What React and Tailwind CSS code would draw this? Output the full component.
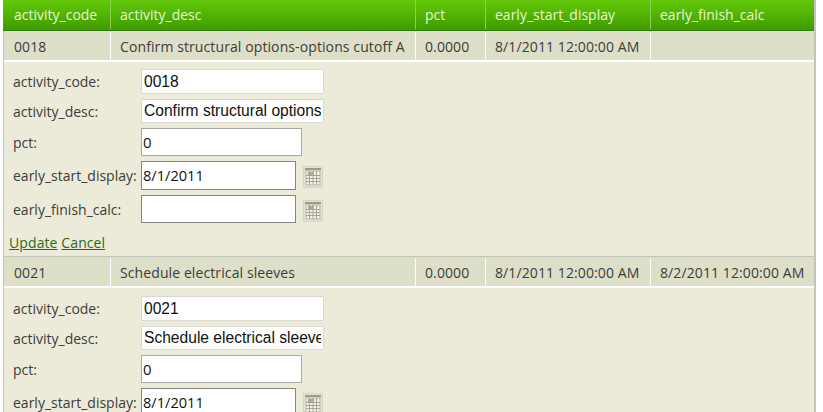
import React from 'react';

const font = "font-['Open_Sans','Noto_Sans',sans-serif]";
const cols = 'grid grid-cols-[106px_305px_70px_165px_165px]';
const columns = ['activity_code', 'activity_desc', 'pct', 'early_start_display', 'early_finish_calc'];

const CalendarIcon = () => (
    <svg width="20" height="22" viewBox="0 0 20 22" className="shrink-0 ml-[7px] mt-[3px]">
        <rect x="0.5" y="0.5" width="19" height="21" fill="#e3e2d0" stroke="#d6d5c2" />
        <rect x="2" y="2" width="16" height="2" fill="#9a9b8c" />
        <rect x="3" y="5" width="14" height="14" fill="#f2f2e8" stroke="#b5b6a6" />
        <path d="M3 9.5h14M3 12.5h14M3 15.5h14M6.5 5v14M10 5v14M13.5 5v14" stroke="#a3a495" strokeWidth="1" />
        <rect x="5" y="6" width="6" height="3" fill="#a9aa9a" />
    </svg>
);

const Field = ({ label, value, inputClass, calendar, rowClass }) => (
    <div className={`flex items-center ${rowClass}`}>
        <label className="w-[137px] shrink-0 pl-[9px] text-[14px] text-[#3c3c38] whitespace-nowrap">{label}</label>
        <input readOnly value={value} className={`h-full bg-white text-[#111] outline-none ${inputClass}`} />
        {calendar && <CalendarIcon />}
    </div>
);

const EditForm = ({ code, desc, start, finish, last }) => (
    <div className={`flex flex-col ${last ? 'pt-[8px]' : 'pt-[7px]'}`}>
        <Field label="activity_code:" value={code} rowClass="h-[25px]" inputClass="w-[183px] border border-[#d8d8d0] rounded-[1px] px-[2px] font-['Liberation_Sans',sans-serif] text-[15.6px]" />
        <Field label="activity_desc:" value={desc} rowClass="h-[24px] mt-[5px]" inputClass="w-[183px] border border-[#d8d8d0] rounded-[1px] px-[2px] font-['Liberation_Sans',sans-serif] text-[15.6px]" />
        <Field label="pct:" value="0" rowClass="h-[28px] mt-[5px]" inputClass="w-[161px] border border-[#a9a99f] px-px text-[15px]" />
        <Field label="early_start_display:" value={start} calendar rowClass="h-[29px] mt-[5px]" inputClass="w-[155px] border border-[#85857c] px-px pb-[2px] text-[14.6px]" />
        {!last && (
            <>
                <Field label="early_finish_calc:" value={finish} calendar rowClass="h-[28px] mt-[5px]" inputClass="w-[155px] border border-[#85857c] px-px text-[14.6px]" />
                <div className="mt-[8px] pl-[5px] h-[23px] text-[14px] leading-[23px] tracking-[0.1px] text-[#2d6a12]">
                    <a href="#" className="underline">Update</a> <a href="#" className="underline">Cancel</a>
                </div>
            </>
        )}
    </div>
);

const DataRow = ({ cells }) => (
    <div className={`${cols} h-[29px] pt-px bg-[#dedfc8] text-[14px] text-[#3c3c38] tracking-[0.1px]`}>
        {cells.map((c, i) => (
            <div key={i} className={`flex items-center whitespace-nowrap overflow-hidden ${i === 0 ? 'pl-[10px]' : 'pl-[9px] border-l border-white'}`}>{c}</div>
        ))}
    </div>
);

export default function App() {
    return (
        <div className={`${font} h-[412px] w-[823px] overflow-hidden bg-white pl-[3px]`}>
            <div className="w-[813px] border-r-2 border-[#c4c4b8]">
                <div className={`${cols} h-[31px] pl-px pb-px bg-gradient-to-b from-[#64c90a] to-[#3f9c00] border-b border-[#2f7d00] text-[14px] text-[#e6f5d6]`}>
                    {columns.map((c, i) => (
                        <div key={c} className={`flex items-center ${i > 0 ? 'pl-[9px] border-l border-[#8ccf5a]' : 'pl-[10px]'}`}>{c}</div>
                    ))}
                </div>
                <div className="border-l border-[#c4c4b8] bg-[#ecebda]">
                    <DataRow cells={['0018', 'Confirm structural options-options cutoff A', '0.0000', '8/1/2011 12:00:00 AM', '']} />
                    <div className="h-[2px] bg-white" />
                    <div className="h-[195px] border-b border-[#c4c4b8]">
                        <EditForm code="0018" desc="Confirm structural options-options cutoff A" start="8/1/2011" finish="" />
                    </div>
                    <DataRow cells={['0021', 'Schedule electrical sleeves', '0.0000', '8/1/2011 12:00:00 AM', '8/2/2011 12:00:00 AM']} />
                    <div className="h-[2px] bg-white" />
                    <EditForm code="0021" desc="Schedule electrical sleeves" start="8/1/2011" finish="8/2/2011" last />
                </div>
            </div>
        </div>
    );
}
